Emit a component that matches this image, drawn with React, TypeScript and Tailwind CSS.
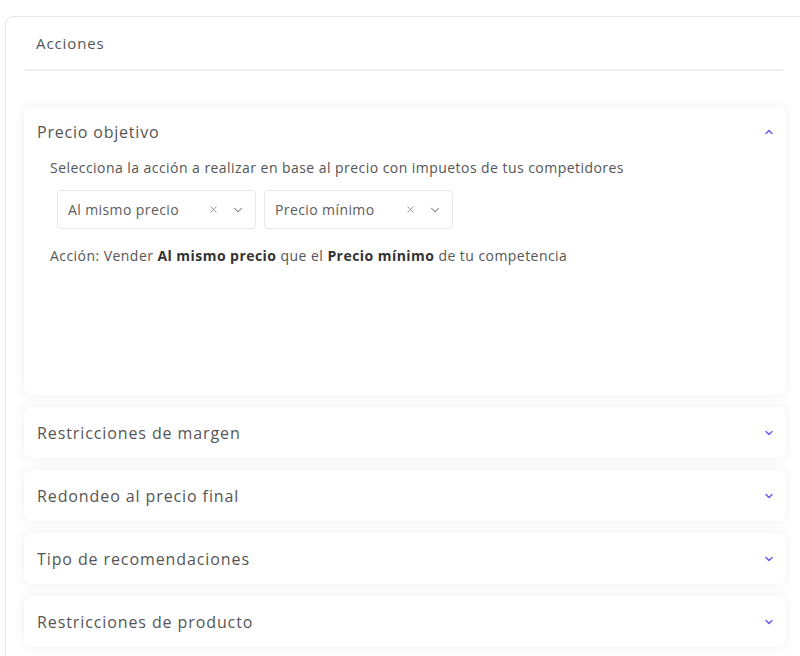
import { ChevronDown, ChevronUp, X } from 'lucide-react'

const font = { fontFamily: '"Open Sans", "Liberation Sans", sans-serif' }

const sections = [
  'Restricciones de margen',
  'Redondeo al precio final',
  'Tipo de recomendaciones',
  'Restricciones de producto',
]

function Select({ value, width }: { value: string; width: string }) {
  return (
    <div className={`${width} h-[39px] flex items-center border border-gray-200 rounded-[4px] pl-[10px] pr-[10px] bg-white`}>
      <span className="flex-1 text-[14px] text-[#5c5c5c] tracking-[0.4px]">{value}</span>
      <X className="w-[11px] h-[11px] text-[#777]" strokeWidth={1.6} />
      <ChevronDown className="w-[14px] h-[14px] text-[#777] ml-[12px]" strokeWidth={1.8} />
    </div>
  )
}

export default function App() {
  return (
    <div className="w-[800px] h-[656px] overflow-hidden bg-white pt-4 pl-[5px]" style={font}>
      <div className="w-[830px] min-h-[700px] border border-[#e6e6e6] rounded-[8px] bg-white">
        {/* Header */}
        <div className="h-[52px] flex items-center pl-[30px] text-[15px] tracking-[0.9px] text-[#555]">Acciones</div>
        <div className="ml-[19px] w-[758px] h-[2px] bg-[#efefef]" />

        {/* Accordion */}
        <div className="mt-[36px] ml-[18px] w-[762px] flex flex-col gap-[12px]">
          <div className="h-[288px] bg-white rounded-[8px] shadow-[0_0_12px_rgba(0,0,0,0.07)]">
            <div className="h-[50px] flex items-center justify-between pl-[13px] pr-[11px]">
              <span className="text-[16px] tracking-[0.8px] text-[#555]">Precio objetivo</span>
              <ChevronUp className="w-[12px] h-[12px] text-[#6d5df2]" strokeWidth={3} />
            </div>
            <div className="pl-[26px] text-[14px] tracking-[0.45px] text-[#555]">
              Selecciona la acción a realizar en base al precio con impuetos de tus competidores
            </div>
            <div className="flex gap-[8px] pl-[33px] mt-[12px]">
              <Select value="Al mismo precio" width="w-[199px]" />
              <Select value="Precio mínimo" width="w-[189px]" />
            </div>
            <div className="pl-[26px] mt-[16px] text-[14px] tracking-[0.45px] text-[#555]">
              Acción: Vender <b className="font-bold text-[#333]">Al mismo precio</b> que el{' '}
              <b className="font-bold text-[#333]">Precio mínimo</b> de tu competencia
            </div>
          </div>

          {sections.map((s) => (
            <div
              key={s}
              className="h-[51px] bg-white rounded-[8px] shadow-[0_0_12px_rgba(0,0,0,0.07)] flex items-center justify-between pl-[13px] pr-[11px]"
            >
              <span className="text-[16px] tracking-[0.9px] text-[#555]">{s}</span>
              <ChevronDown className="w-[12px] h-[12px] text-[#6d5df2]" strokeWidth={3} />
            </div>
          ))}
        </div>
      </div>
    </div>
  )
}
